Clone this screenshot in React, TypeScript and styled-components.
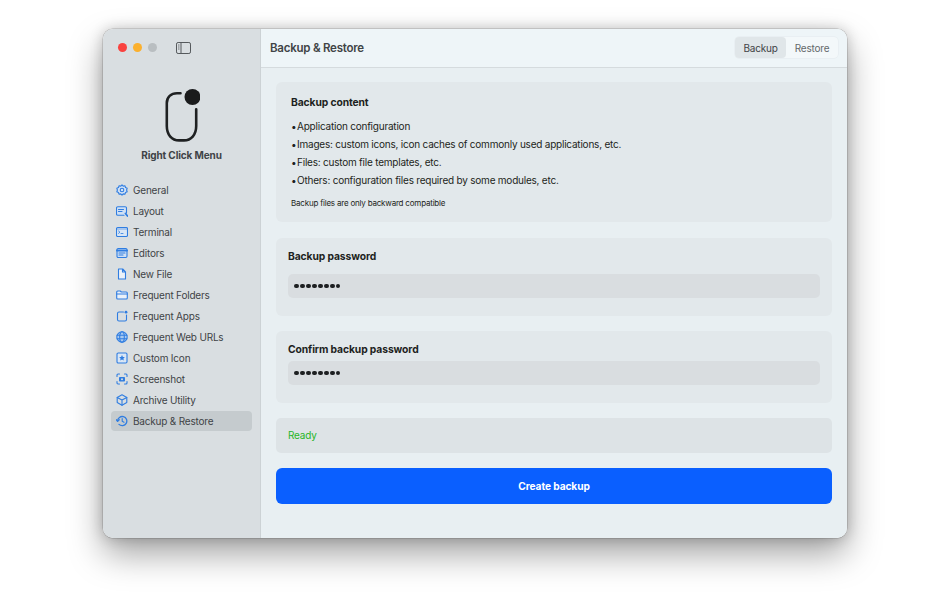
import React, { FunctionComponent } from 'react';
import styled, { createGlobalStyle } from 'styled-components';

const colours = {
  sidebar: '#d9dee1',
  sidebarBorder: '#ccd2d5',
  main: '#e8eff2',
  header: '#eef5f8',
  card: '#e2e8eb',
  input: '#d9dde0',
  text: '#1d1f21',
  muted: '#3f4346',
  blue: '#2f7de1',
  primary: '#0a5fff',
  green: '#27b527',
};

const GlobalStyle = createGlobalStyle`
  html, body {
    margin: 0;
    padding: 0;
    background: #ffffff;
    font-family: Inter, "Liberation Sans", sans-serif;
  }
`;

const Page = styled.div`
  width: 950px;
  height: 594px;
  padding: 29px 103px 56px;
  box-sizing: border-box;
  overflow: hidden;
`;

const Window = styled.div`
  display: flex;
  height: 509px;
  border-radius: 10px;
  overflow: hidden;
  box-shadow: 0 0 0 0.5px rgba(0, 0, 0, 0.22), 0 16px 34px rgba(0, 0, 0, 0.36), 0 0 14px rgba(0, 0, 0, 0.2);
`;

const Sidebar = styled.aside`
  width: 157px;
  flex-shrink: 0;
  background: ${colours.sidebar};
  border-right: 1px solid ${colours.sidebarBorder};
  display: flex;
  flex-direction: column;
`;

const TitleBar = styled.div`
  display: flex;
  align-items: center;
  height: 37px;
  padding-left: 14.5px;
`;

const Light = styled.span<{ $colour: string }>`
  width: 9.5px;
  height: 9.5px;
  border-radius: 50%;
  margin-right: 5.5px;
  background: ${props => props.$colour};
`;

const ToggleIcon = styled.svg`
  margin-left: 13.5px;
  width: 15px;
  height: 12px;
`;

const Brand = styled.div`
  display: flex;
  flex-direction: column;
  align-items: center;
  padding-top: 23px;
`;

const BrandName = styled.div`
  font-size: 10px;
  line-height: 14px;
  letter-spacing: -0.12px;
  font-weight: 700;
  color: ${colours.muted};
  margin: 5px 0 1px;
`;

const Nav = styled.nav`
  display: flex;
  flex-direction: column;
  gap: 1px;
  padding: 17px 8px 0;
`;

const NavRow = styled.div<{ $active?: boolean }>`
  display: flex;
  align-items: center;
  gap: 5px;
  height: 20px;
  padding-left: 5px;
  border-radius: 4px;
  font-size: 10px;
  letter-spacing: -0.2px;
  color: ${colours.muted};
  background: ${props => (props.$active ? '#c5cbce' : 'transparent')};
`;

const NavIcon = styled.svg`
  width: 12px;
  height: 12px;
  flex-shrink: 0;
  fill: none;
  stroke: ${colours.blue};
  stroke-width: 1.1;
  stroke-linecap: round;
  stroke-linejoin: round;
`;

const Main = styled.main`
  flex: 1;
  display: flex;
  flex-direction: column;
  background: ${colours.main};
  min-width: 0;
`;

const Header = styled.header`
  display: flex;
  align-items: center;
  justify-content: space-between;
  padding: 0 9px 1px;
  height: 37px;
  background: ${colours.header};
  border-bottom: 1px solid #d5dbde;
`;

const HeaderTitle = styled.h1`
  margin: 0;
  font-size: 11.5px;
  letter-spacing: -0.23px;
  font-weight: 600;
  color: ${colours.muted};
`;

const Segments = styled.div`
  display: flex;
  height: 21px;
  border-radius: 4px;
  background: #f3f8fa;
  box-shadow: 0 0 0 0.5px #e3eaed;
`;

const Segment = styled.div<{ $active?: boolean }>`
  display: flex;
  align-items: center;
  justify-content: center;
  width: ${props => (props.$active ? '51px' : '52px')};
  border-radius: 4px;
  font-size: 10px;
  letter-spacing: -0.2px;
  color: ${props => (props.$active ? colours.muted : '#63686b')};
  background: ${props => (props.$active ? '#e0e6e9' : 'transparent')};
`;

const Content = styled.div`
  display: flex;
  flex-direction: column;
  padding: 14px 15px 0 15px;
`;

const Card = styled.section<{ $height: number; $mb?: number; $pad?: string }>`
  height: ${props => props.$height}px;
  margin-bottom: ${props => props.$mb ?? 15}px;
  padding: ${props => props.$pad ?? '0 12px'};
  box-sizing: border-box;
  border-radius: 6px;
  background: ${colours.card};
`;

const CardTitle = styled.div`
  font-size: 10.3px;
  line-height: 14px;
  letter-spacing: -0.1px;
  font-weight: 700;
  color: ${colours.text};
`;

const BulletList = styled.ul`
  list-style: none;
  margin: 8px 0 0;
  padding: 0;
`;

const Bullet = styled.li`
  display: flex;
  font-size: 10px;
  line-height: 18px;
  letter-spacing: -0.22px;
  color: ${colours.text};
`;

const BulletMark = styled.span`
  width: 6px;
  flex-shrink: 0;
`;

const Note = styled.div`
  margin-top: 8px;
  font-size: 8px;
  line-height: 12px;
  letter-spacing: -0.2px;
  color: ${colours.text};
`;

const PasswordField = styled.div<{ $gap: number }>`
  display: flex;
  align-items: center;
  height: 24px;
  margin-top: ${props => props.$gap}px;
  padding-left: 6px;
  border-radius: 5px;
  background: ${colours.input};
`;

const Dot = styled.span`
  width: 4.6px;
  height: 4.6px;
  margin-right: 1.4px;
  border-radius: 50%;
  background: ${colours.text};
`;

const ReadyCard = styled.div`
  display: flex;
  align-items: center;
  height: 34px;
  padding: 0 0 1px 12px;
  margin-bottom: 15px;
  border-radius: 5px;
  background: #dde3e6;
  font-size: 10px;
  letter-spacing: -0.2px;
  color: ${colours.green};
`;

const PrimaryButton = styled.button`
  height: 36px;
  border: none;
  border-radius: 6px;
  background: ${colours.primary};
  color: #ffffff;
  font-family: inherit;
  font-size: 10.2px;
  letter-spacing: -0.1px;
  font-weight: 700;
`;

const Logo: FunctionComponent = () => (
  <svg width="36" height="54" viewBox="0 0 36 54">
    <path d="M16.5 4.3H13C7 4.3 2.8 8 2.8 14V37C2.8 46 8 51.4 15 51.4H20C27 51.4 32.2 46 32.2 37V20.3" fill="none" stroke="#1f2122" strokeWidth="2.6" strokeLinecap="round" />
    <circle cx="28.5" cy="8" r="8" fill="#1a1b1c" />
  </svg>
);

const icons: Record<string, React.ReactNode> = {
  General: (
    <>
      <path d="M6 .8 7.2 2.1 9 1.8 9.5 3.5 11.2 4.2 10.6 6 11.2 7.8 9.5 8.5 9 10.2 7.2 9.9 6 11.2 4.8 9.9 3 10.2 2.5 8.5.8 7.8 1.4 6 .8 4.2 2.5 3.5 3 1.8 4.8 2.1Z" fill="#d3e2f5" />
      <circle cx="6" cy="6" r="1.8" />
    </>
  ),
  Layout: (
    <>
      <path d="M10.5 8V3a1.3 1.3 0 0 0-1.3-1.3H1.8A1.3 1.3 0 0 0 .5 3v6a1.3 1.3 0 0 0 1.3 1.3H8" fill="#cfe0f5" />
      <path d="M2.5 4.5h5M2.5 6.5h3.5" />
      <path d="M9.5 8.5 11.5 11" strokeWidth="1.8" />
    </>
  ),
  Terminal: (
    <>
      <rect x=".5" y="1.5" width="11" height="9" rx="1.2" fill="#d9e6f5" />
      <path d="M.5 3h11" strokeWidth=".6" />
      <path d="M2.5 5l1.5 1.2-1.5 1.2M5 7.5h2" strokeWidth=".8" />
    </>
  ),
  Editors: (
    <>
      <rect x="1" y="1.5" width="10" height="9" rx="1.2" fill="#cfe0f5" />
      <path d="M1 3.5h10" strokeWidth="2" />
      <path d="M3 6h6M3 8h4" />
    </>
  ),
  'New File': <path d="M2.5 1h4.2L9.5 3.8V11h-7ZM6.5 1v3h3" fill="#eaf1f9" />,
  'Frequent Folders': (
    <>
      <path d="M.7 3a1 1 0 0 1 1-1h2.6l1 1h5a1 1 0 0 1 1 1v5a1 1 0 0 1-1 1H1.7a1 1 0 0 1-1-1Z" fill="#eaf1f9" />
      <path d="M.7 5h10.6" />
    </>
  ),
  'Frequent Apps': (
    <>
      <path d="M7.5 2H3a1.5 1.5 0 0 0-1.5 1.5v6A1.5 1.5 0 0 0 3 11h6a1.5 1.5 0 0 0 1.5-1.5V5" />
      <circle cx="10" cy="2.2" r="1.4" fill={colours.blue} stroke="none" />
    </>
  ),
  'Frequent Web URLs': (
    <>
      <circle cx="6" cy="6" r="5.2" fill="#a9c9ef" />
      <ellipse cx="6" cy="6" rx="2.3" ry="5.2" />
      <path d="M1 4.3h10M1 7.7h10" />
    </>
  ),
  'Custom Icon': (
    <>
      <rect x="1" y="1" width="10" height="10" rx="1.2" fill="#d9e6f5" />
      <path d="M6 3l.9 1.9 2 .2-1.5 1.4.4 2L6 7.6 4.2 8.5l.4-2L3.1 5.1l2-.2Z" fill={colours.blue} stroke="none" />
    </>
  ),
  Screenshot: (
    <>
      <path d="M1 3.5V2a1 1 0 0 1 1-1h1.5M8.5 1H10a1 1 0 0 1 1 1v1.5M11 8.5V10a1 1 0 0 1-1 1H8.5M3.5 11H2a1 1 0 0 1-1-1V8.5" />
      <rect x="3" y="4" width="6" height="4.5" rx=".8" fill={colours.blue} stroke="none" />
      <circle cx="6" cy="6.2" r="1" fill="#d9dee1" stroke="none" />
    </>
  ),
  'Archive Utility': (
    <>
      <path d="M6 .8 10.8 3.4V8.6L6 11.2 1.2 8.6V3.4Z" />
      <path d="M1.2 3.4 6 6l4.8-2.6M6 6v5.2" />
    </>
  ),
  'Backup & Restore': (
    <>
      <path d="M1.6 6A4.6 4.6 0 1 1 3 9.4" strokeWidth="1.3" />
      <path d="M.2 4.6 1.6 6.4 3.2 4.8" strokeWidth="1.3" />
      <path d="M6.2 3.6V6.2L8 7.3" />
    </>
  ),
};

const navItems = Object.keys(icons);

const bullets = [
  'Application configuration',
  'Images: custom icons, icon caches of commonly used applications, etc.',
  'Files: custom file templates, etc.',
  'Others: configuration files required by some modules, etc.',
];

const Dots: FunctionComponent<{ gap: number }> = ({ gap }) => (
  <PasswordField $gap={gap}>
    {Array.from({ length: 8 }, (_, i) => <Dot key={i} />)}
  </PasswordField>
);

const App: FunctionComponent = () => (
  <Page>
    <GlobalStyle />
    <Window>
      <Sidebar>
        <TitleBar>
          <Light $colour="#f9423f" />
          <Light $colour="#fbb02e" />
          <Light $colour="#b9bec1" />
          <ToggleIcon viewBox="0 0 15 12" fill="none" stroke="#55595c" strokeWidth="1">
            <rect x=".5" y=".5" width="14" height="11" rx="1.6" />
            <path d="M5 .5v11" />
            <path d="M2 3h1.5M2 5h1.5M2 7h1.5" strokeWidth=".8" />
          </ToggleIcon>
        </TitleBar>
        <Brand>
          <Logo />
          <BrandName>Right Click Menu</BrandName>
        </Brand>
        <Nav>
          {navItems.map(item => (
            <NavRow key={item} $active={item === 'Backup & Restore'}>
              <NavIcon viewBox="0 0 12 12">{icons[item]}</NavIcon>
              {item}
            </NavRow>
          ))}
        </Nav>
      </Sidebar>
      <Main>
        <Header>
          <HeaderTitle>Backup &amp; Restore</HeaderTitle>
          <Segments>
            <Segment $active>Backup</Segment>
            <Segment>Restore</Segment>
          </Segments>
        </Header>
        <Content>
          <Card $height={140} $mb={16} $pad="13px 15px 0">
            <CardTitle>Backup content</CardTitle>
            <BulletList>
              {bullets.map(text => <Bullet key={text}><BulletMark>•</BulletMark>{text}</Bullet>)}
            </BulletList>
            <Note>Backup files are only backward compatible</Note>
          </Card>
          <Card $height={78} $pad="11px 12px 0">
            <CardTitle>Backup password</CardTitle>
            <Dots gap={11} />
          </Card>
          <Card $height={72} $pad="11px 12px 0">
            <CardTitle>Confirm backup password</CardTitle>
            <Dots gap={5} />
          </Card>
          <ReadyCard>Ready</ReadyCard>
          <PrimaryButton>Create backup</PrimaryButton>
        </Content>
      </Main>
    </Window>
  </Page>
);

export default App;
